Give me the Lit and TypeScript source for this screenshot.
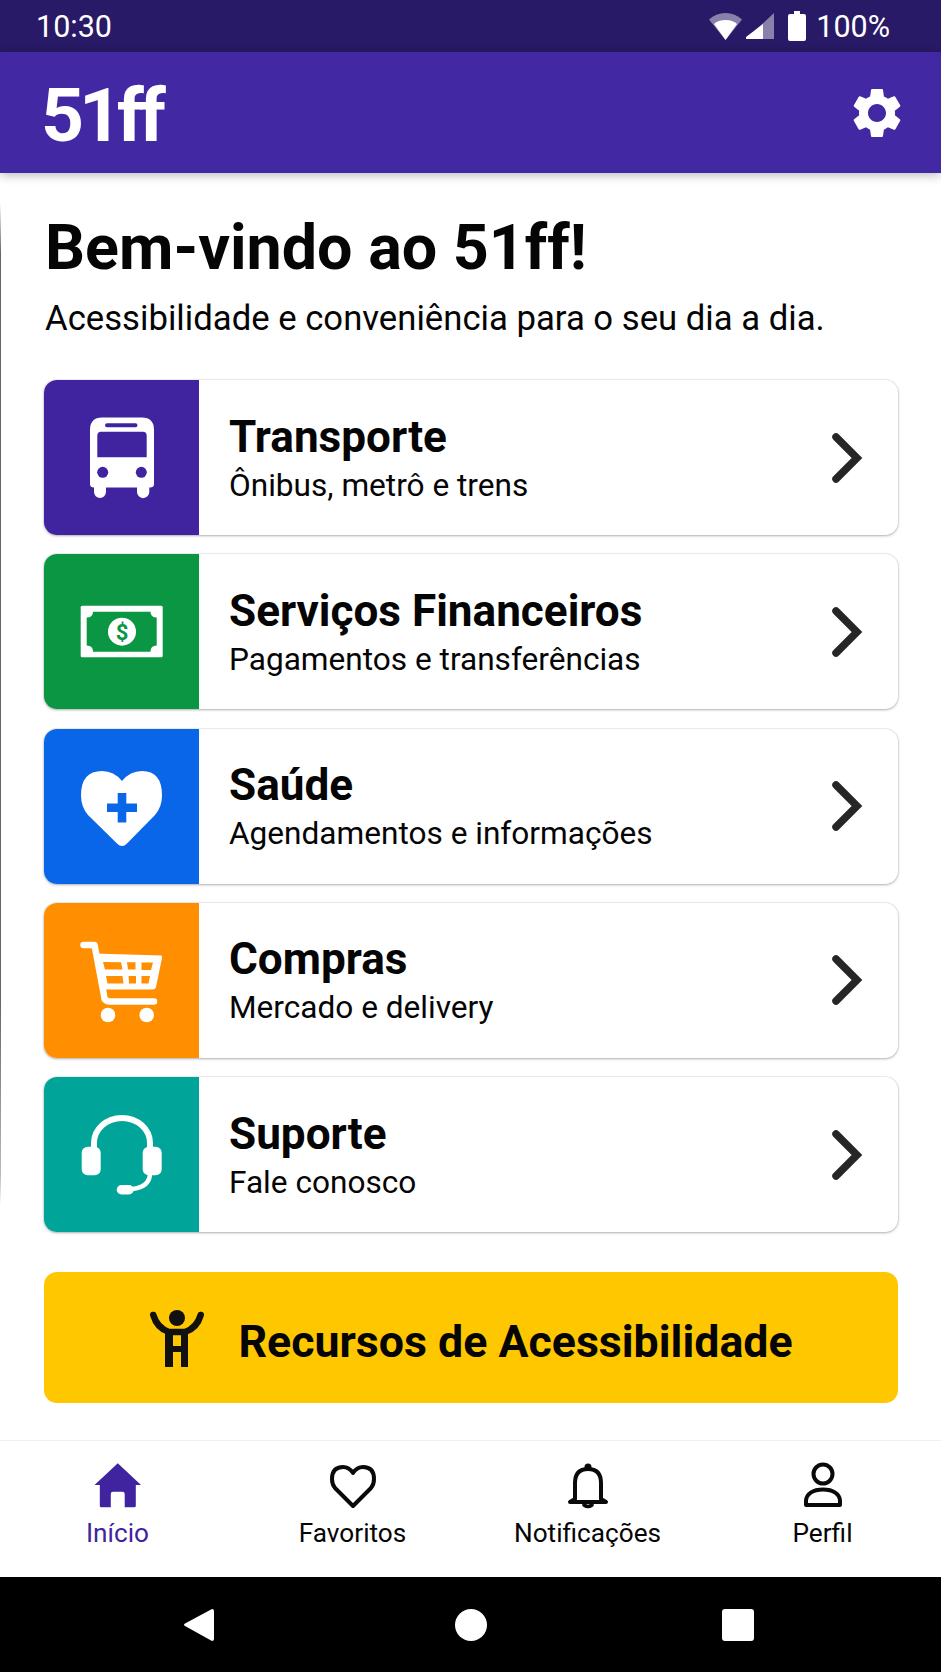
import { LitElement, html, css, svg } from "lit";
import { customElement } from "lit/decorators.js";

const chevron = html`<svg class="chev" viewBox="0 0 40 60"><path d="M7 9 L28 30 L7 51" fill="none" stroke="#262626" stroke-width="7.5" stroke-linecap="round" stroke-linejoin="miter"/></svg>`;

const bus = svg`<path fill="#fff" fill-rule="evenodd" d="M58 37.5H98Q110 37.5 110 50V104Q110 107.5 106 107.5H50Q46 107.5 46 104V50Q46 37.5 58 37.5ZM63 43.3a2 2 0 0 0 0 4H91.5a2 2 0 0 0 0-4ZM57 51.7Q53.3 51.7 53.3 55.5V77.3H102.7V55.5Q102.7 51.7 99 51.7Z"/>
<circle cx="58.7" cy="92.3" r="5.5" fill="#40249f"/><circle cx="97.3" cy="92.3" r="5.5" fill="#40249f"/>
<path fill="#fff" d="M50 105H62V112a6 6 0 0 1-12 0ZM93 105H105.3V112a6.15 6.15 0 0 1-12.3 0Z"/>`;

const money = svg`<rect x="36.7" y="51.7" width="82" height="51.6" rx="1.5" fill="#fff"/>
<path fill="#0a9643" d="M49 57.7H106.5Q106.5 63.5 112.7 63.5V91.5Q106.5 91.5 106.5 97.7H49Q49 91.5 42.7 91.5V63.5Q49 63.5 49 57.7Z"/>
<circle cx="78" cy="77.7" r="14" fill="#fff"/>
<text x="78" y="85.5" text-anchor="middle" class="dollar">$</text>`;

const heart = svg`<path fill="#fff" d="M78 117Q75.500 117 73 114.500L44 86Q37 78 37 66.500Q37 42 58 42Q70 42 78 52Q86 42 98 42Q118 42 118 66.500Q118 78 111 86L83 114.500Q80.500 117 78 117Z"/>
<path fill="#0a66e8" d="M73.700 64H82.300V74.400H93V83H82.300V93.500H73.700V83H63V74.400H73.700Z"/>`;

const cart = svg`<path fill="none" stroke="#fff" stroke-width="6.500" stroke-linecap="round" stroke-linejoin="round" d="M39.500 42H50.500L60 92.500Q60 98.500 66 98.500H110"/>
<path fill="#fff" d="M50 50.500L117.500 52.500Q118.200 53 118 55L112 84Q111.500 86.500 108 86.500H58Z"/>
<path fill="#ff8f00" d="M59 59L77 59.300L78.500 66.500H61ZM83 59.300H91.500V66.500H84ZM97.500 59.500H109L107 67H97.500ZM62 73H78.500L79.500 80.500H63.500ZM84.500 73H92V80.500H85ZM97.500 73H106L104.500 80.500H97.500Z"/>
<circle cx="64" cy="112" r="7.300" fill="#fff"/><circle cx="102.700" cy="112" r="7.300" fill="#fff"/>`;

const headset = svg`<path fill="none" stroke="#fff" stroke-width="6" d="M50 72V66a28 25 0 0 1 56 0V72"/>
<rect x="37.700" y="69.700" width="19" height="28.500" rx="6" fill="#fff"/><rect x="98.700" y="69.700" width="19" height="28.500" rx="6" fill="#fff"/>
<path fill="none" stroke="#fff" stroke-width="4.500" d="M106 96Q106 110 88 112"/>
<rect x="72.700" y="108" width="17" height="9.500" rx="4.700" fill="#fff"/>`;

const items = [
  { t: "Transporte", s: "Ônibus, metrô e trens", c: "#40249f", i: bus },
  { t: "Serviços Financeiros", s: "Pagamentos e transferências", c: "#0a9643", i: money },
  { t: "Saúde", s: "Agendamentos e informações", c: "#0a66e8", i: heart },
  { t: "Compras", s: "Mercado e delivery", c: "#ff8f00", i: cart },
  { t: "Suporte", s: "Fale conosco", c: "#00a499", i: headset },
];

@customElement("app-root")
export class AppRoot extends LitElement {
  static styles = css`
    :host { display: block; width: 941px; height: 1672px; font-family: Roboto, "Liberation Sans", sans-serif; color: #050505; background: #fff; }
    .page { display: flex; flex-direction: column; height: 1672px; overflow: hidden; }
    .status { height: 52px; flex: none; background: #281a66; color: #fff; display: flex; align-items: center; justify-content: space-between; padding: 0 51px 0 36px; font-size: 30.5px; }
    .status-icons { display: flex; align-items: center; }
    .wifi { width: 33px; height: 27px; margin-right: 4px; }
    .signal { width: 28px; height: 26px; margin-right: 14px; }
    .battery { width: 18px; height: 30px; margin-right: 10px; }
    .appbar { height: 121px; flex: none; background: #4229a3; display: flex; align-items: center; justify-content: space-between; padding: 0 34px 0 41px; box-shadow: 0 2px 10px rgba(0,0,0,.28); position: relative; color: #fff; }
    .logo { font-size: 75px; font-weight: 700; letter-spacing: -5px; line-height: 1; margin-top: 6px; }
    .gear { width: 60px; height: 60px; display: block; }
    main { flex: 1; display: flex; flex-direction: column; padding: 40px 43px 0 44px; position: relative; }
    .edge { position: absolute; left: 0; top: 30px; width: 1px; height: 1002px; background: linear-gradient(#8880, #666 5%, #666 80%, #bbb 97%, #ddd0); }
    h1 { margin: 0 0 0 1px; font-size: 62.8px; font-weight: 700; line-height: 70px; }
    .lead { margin: 14px 0 0 1px; font-size: 34.7px; line-height: 42px; }
    .list { display: flex; flex-direction: column; gap: 19.25px; margin-top: 41px; }
    .card { height: 155px; display: flex; align-items: center; background: #fff; border-radius: 13px; box-shadow: 0 0 0 1px rgba(0,0,0,.05), 0 1px 3px rgba(0,0,0,.28); overflow: hidden; }
    .panel { width: 155px; height: 155px; flex: none; }
    .panel svg { width: 155px; height: 155px; display: block; }
    .dollar { font-family: Roboto, sans-serif; font-weight: 700; font-size: 22px; fill: #0a9643; }
    .body { flex: 1; padding: 3px 0 0 30px; }
    .title { font-size: 44.1px; font-weight: 700; line-height: 52px; }
    .sub { font-size: 31.6px; line-height: 44px; padding-top: 1px; }
    .chev { width: 40px; height: 60px; margin-right: 29px; display: block; }
    .cta { margin-top: 40px; height: 131px; flex: none; border-radius: 13px; background: #ffc700; display: flex; align-items: center; justify-content: center; gap: 29px; font-size: 44.7px; font-weight: 700; }
    .cta span { padding-top: 8px; }
    .cta svg { width: 60px; height: 60px; display: block; margin-top: 4px; }
    nav { height: 136px; flex: none; border-top: 1px solid #f0f0f0; display: grid; grid-template-columns: repeat(4, 1fr); padding: 0 1px 0 0; }
    .tab { display: flex; flex-direction: column; align-items: center; padding-top: 20px; font-size: 26.2px; line-height: 32px; }
    .tab svg { width: 48px; height: 48px; display: block; margin-bottom: 8px; }
    .tab.on { color: #40249f; }
    .sys { height: 95px; flex: none; background: #000; display: flex; align-items: center; padding-left: 183px; }
    .sys svg { width: 32px; height: 34px; display: block; flex: none; }
    .sys .back { margin-right: 240px; }
    .sys .home { margin-right: 235px; }
  `;

  render() {
    return html`<div class="page">
      <div class="status">
        <span>10:30</span>
        <div class="status-icons">
          <svg class="wifi" viewBox="0 0 33 27"><path d="M16.500 0C10 0 4.500 2.300 0 6.500L16.500 27L33 6.500C28.500 2.300 23 0 16.500 0Z" fill="#fff" fill-opacity=".45"/><path d="M16.500 7C11.500 7 8 8.500 5 11L16.500 27L28 11C25 8.500 21.500 7 16.500 7Z" fill="#fff"/></svg>
          <svg class="signal" viewBox="0 0 28 26"><path d="M28 0V26H0Z" fill="#fff" fill-opacity=".45"/><path d="M17 11V26H0V24Z" fill="#fff"/></svg>
          <svg class="battery" viewBox="0 0 18 30"><path d="M6 0H12V3H16Q18 3 18 5V28Q18 30 16 30H2Q0 30 0 28V5Q0 3 2 3H6Z" fill="#fff"/></svg>
          <span>100%</span>
        </div>
      </div>
      <header class="appbar">
        <span class="logo">51ff</span>
        <svg class="gear" viewBox="0 0 24 24"><path fill="#fff" d="M19.140,12.940c0.040-0.300,0.060-0.610,0.060-0.940c0-0.320-0.020-0.640-0.070-0.940l2.030-1.580c0.180-0.140,0.230-0.410,0.120-0.610l-1.920-3.320c-0.120-0.220-0.370-0.290-0.590-0.220l-2.390,0.960c-0.500-0.380-1.030-0.700-1.620-0.940L14.400,2.810c-0.040-0.240-0.240-0.410-0.480-0.410h-3.840c-0.240,0-0.430,0.170-0.470,0.410L9.250,5.350C8.660,5.590,8.120,5.920,7.630,6.290L5.240,5.330c-0.220-0.080-0.470,0-0.590,0.220L2.740,8.870C2.620,9.080,2.660,9.340,2.860,9.480l2.030,1.580C4.840,11.360,4.800,11.690,4.800,12s0.020,0.640,0.070,0.940l-2.030,1.580c-0.180,0.140-0.230,0.410-0.120,0.610l1.920,3.320c0.120,0.220,0.370,0.290,0.590,0.220l2.390-0.960c0.500,0.380,1.030,0.700,1.620,0.940l0.360,2.540c0.050,0.240,0.240,0.410,0.480,0.410h3.840c0.240,0,0.440-0.170,0.470-0.410l0.360-2.540c0.590-0.240,1.130-0.560,1.620-0.940l2.390,0.960c0.220,0.080,0.470,0,0.590-0.220l1.920-3.320c0.120-0.220,0.070-0.470-0.120-0.610L19.140,12.940z M12,15.600c-1.980,0-3.600-1.620-3.600-3.600s1.620-3.600,3.600-3.600s3.600,1.620,3.600,3.600S13.980,15.600,12,15.600z"/></svg>
      </header>
      <main>
        <div class="edge"></div>
        <h1>Bem-vindo ao 51ff!</h1>
        <p class="lead">Acessibilidade e conveniência para o seu dia a dia.</p>
        <div class="list">
          ${items.map((it) => html`<div class="card">
            <div class="panel" style="background:${it.c}"><svg viewBox="0 0 155 155">${it.i}</svg></div>
            <div class="body"><div class="title">${it.t}</div><div class="sub">${it.s}</div></div>
            ${chevron}
          </div>`)}
        </div>
        <div class="cta">
          <svg viewBox="0 0 60 60">
            <circle cx="28" cy="8" r="8" fill="#111"/>
            <path fill="none" stroke="#111" stroke-width="6.500" stroke-linecap="round" d="M4.300 5Q8 18 20 22H36Q48 18 51.700 5"/>
            <path fill="#111" fill-rule="evenodd" d="M16 20H39V57H32V42H24V57H16ZM24 25V36H32V25Z"/>
          </svg>
          <span>Recursos de Acessibilidade</span>
        </div>
      </main>
      <nav>
        <div class="tab on"><svg viewBox="0 0 48 48"><path fill="#40249f" d="M23.800 2.300L47 24H41.800V44.800Q41.800 46.300 40.300 46.300H30.700V33Q30.700 30.700 28.500 30.700H19Q16.800 30.700 16.800 33V46.300H7.300Q5.800 46.300 5.800 44.800V24H.5Z"/></svg>Início</div>
        <div class="tab"><svg viewBox="0 0 48 48"><path fill="none" stroke="#0a0a0a" stroke-width="4" stroke-linejoin="round" d="M24 45L6 27Q3 23.500 3 18Q3 6 14 6Q20 6 24 12Q28 6 34 6Q45 6 45 18Q45 23.500 42 27Z"/></svg>Favoritos</div>
        <div class="tab"><svg viewBox="0 0 48 48"><path fill="none" stroke="#0a0a0a" stroke-width="4" stroke-linejoin="round" d="M11 38V22Q11 8 24 8Q37 8 37 22V38L42 41H6Z"/><circle cx="24" cy="6" r="3.500" fill="#0a0a0a"/><path fill="none" stroke="#0a0a0a" stroke-width="3.500" stroke-linecap="round" d="M20 44Q24 47 28 44"/></svg>Notificações</div>
        <div class="tab"><svg viewBox="0 0 48 48"><circle cx="24" cy="13" r="9.500" fill="none" stroke="#0a0a0a" stroke-width="4"/><path fill="none" stroke="#0a0a0a" stroke-width="4" stroke-linejoin="round" d="M7 44V40C7 33 14 28.500 24 28.500C34 28.500 41 33 41 40V44Z"/></svg>Perfil</div>
      </nav>
      <div class="sys">
        <svg class="back" viewBox="0 0 32 34"><path fill="#fff" d="M29 1Q31 1 31 3V31Q31 33 29 33L2 18Q0 17 2 15.500Z"/></svg>
        <svg class="home" viewBox="0 0 32 34"><circle cx="16" cy="17" r="16" fill="#fff"/></svg>
        <svg viewBox="0 0 32 34"><rect y="1" width="32" height="32" rx="3" fill="#fff"/></svg>
      </div>
    </div>`;
  }
}
